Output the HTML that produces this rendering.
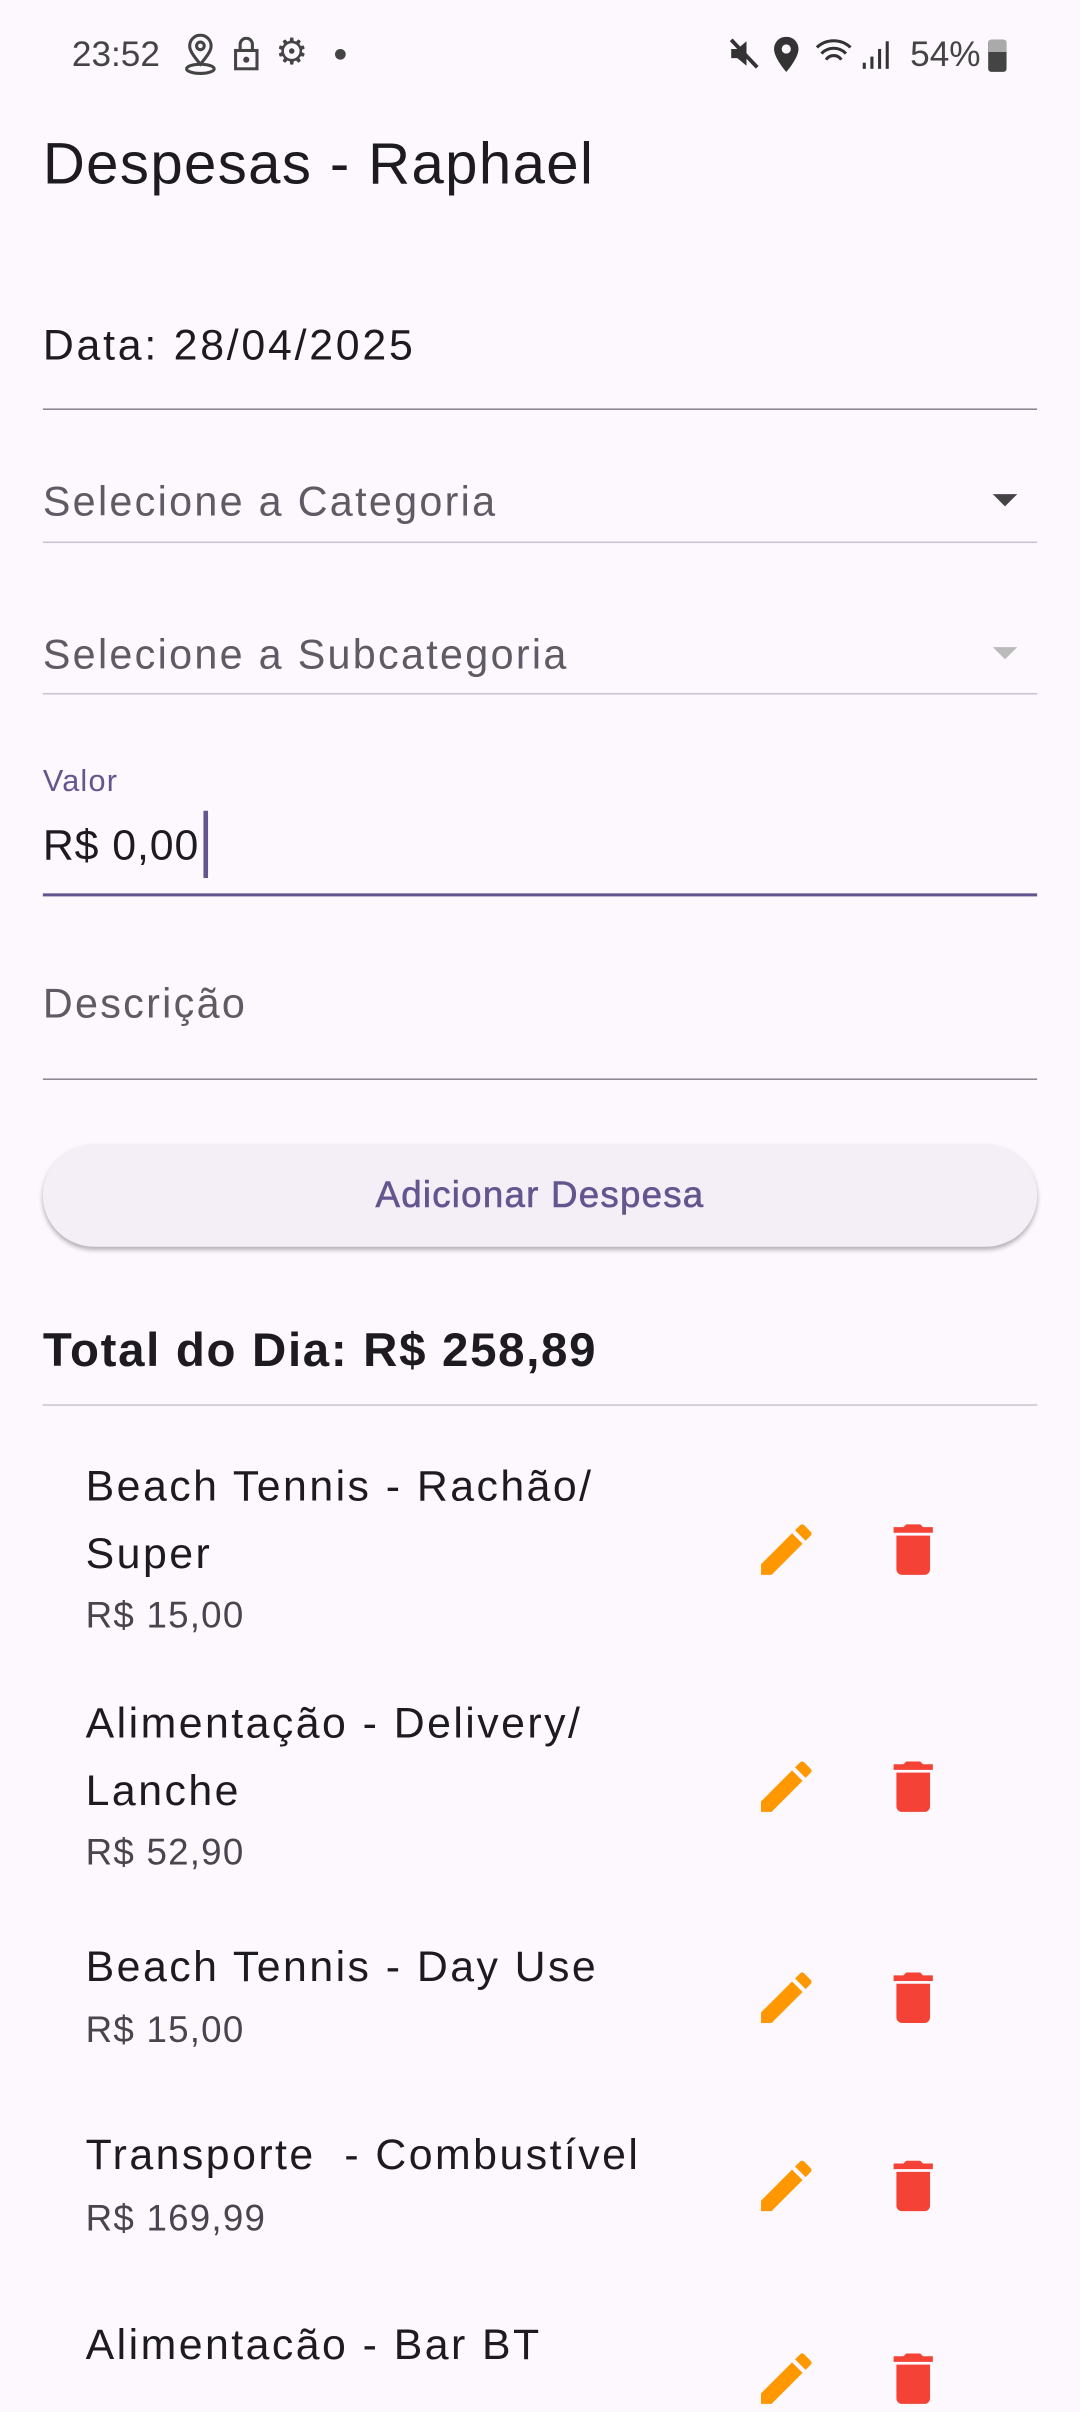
<!DOCTYPE html>
<html><head><meta charset="utf-8"><style>
html,body{margin:0;padding:0;background:#fdf7fe;}
body{width:1080px;height:2400px;overflow:hidden;position:relative;}
#w{position:absolute;left:0;top:0;width:706px;height:1569px;transform:scale(1.5297);transform-origin:0 0;font-family:"Liberation Sans",sans-serif;color:#1d1b20;}
.a{position:absolute;white-space:nowrap;}
.ln{position:absolute;left:28px;width:650px;height:1px;background:#8a8590;}
.lbl{font-size:27px;color:#5f5b64;letter-spacing:1.5px;}
.it{font-size:28px;color:#1d1b20;line-height:44px;letter-spacing:1.6px;}
.pr{font-size:24px;color:#49454f;letter-spacing:0.8px;}
svg.ic{position:absolute;width:44px;height:44px;}
</style></head><body><div id="w">
<div class="a" style="left:47px;top:22px;font-size:23px;color:#444">23:52</div>
<svg class="a" style="left:118px;top:22px" width="26" height="28" viewBox="0 0 26 28" fill="none" stroke="#444" stroke-width="2"><path d="M13 20C8 14 6 11 6 8a7 7 0 0 1 14 0c0 3-2 6-7 12z"/><circle cx="13" cy="8" r="2.5"/><ellipse cx="13" cy="23" rx="9" ry="3"/></svg>
<svg class="a" style="left:152px;top:24px" width="18" height="22" viewBox="0 0 18 22" fill="none" stroke="#444" stroke-width="2"><rect x="2" y="9" width="14" height="12"/><path d="M5 9V5a4 4 0 0 1 8 0v4"/><circle cx="9" cy="15" r="1" fill="#444"/></svg>
<div class="a" style="left:180px;top:20px;font-size:24px;color:#444">⚙</div>
<div class="a" style="left:219px;top:32px;width:7px;height:7px;border-radius:50%;background:#444"></div>
<svg class="a" style="left:475px;top:24px" width="22" height="22" viewBox="0 0 22 22"><path d="M3 8h4l6-5v16l-6-5H3z" fill="#333"/><path d="M3 2l17 18" stroke="#333" stroke-width="2.5"/></svg>
<svg class="a" style="left:505px;top:24px" width="18" height="24" viewBox="0 0 18 24"><path d="M9 0a8 8 0 0 0-8 8c0 6 8 15 8 15s8-9 8-15a8 8 0 0 0-8-8z" fill="#333"/><circle cx="9" cy="8" r="3" fill="#fdf7fe"/></svg>
<svg class="a" style="left:532px;top:24px" width="28" height="22" viewBox="0 0 28 22" fill="none" stroke="#333" stroke-width="2"><path d="M2 7a16 16 0 0 1 22 0M5 11a11 11 0 0 1 16 0M8 15a6 6 0 0 1 10 0"/></svg>
<svg class="a" style="left:563px;top:26px" width="22" height="20" viewBox="0 0 22 20" fill="#333"><rect x="1" y="15" width="2" height="4"/><rect x="6" y="11" width="2" height="8"/><rect x="11" y="6" width="2" height="13"/><rect x="16" y="1" width="2" height="18"/></svg>
<div class="a" style="left:595px;top:22px;font-size:23px;color:#444">54%</div>
<div class="a" style="left:646px;top:26px;width:12px;height:21px;background:#444;border-radius:2px"></div>
<div class="a" style="left:646px;top:26px;width:12px;height:8px;background:#aaa;border-radius:2px 2px 0 0"></div>

<div class="a" style="left:28px;top:87px;font-size:38px;letter-spacing:0.9px">Despesas - Raphael</div>
<div class="a" style="left:28px;top:210px;font-size:28px;letter-spacing:1.8px">Data: 28/04/2025</div>
<div class="ln" style="top:267px"></div>
<div class="a lbl" style="left:28px;top:313px">Selecione a Categoria</div>
<div class="a" style="left:649px;top:323px;width:0;height:0;border-left:8px solid transparent;border-right:8px solid transparent;border-top:8px solid #444"></div>
<div class="ln" style="top:354px;background:#cac4d0"></div>
<div class="a lbl" style="left:28px;top:413px">Selecione a Subcategoria</div>
<div class="a" style="left:649px;top:423px;width:0;height:0;border-left:8px solid transparent;border-right:8px solid transparent;border-top:8px solid #bbb"></div>
<div class="ln" style="top:453px;background:#cac4d0"></div>
<div class="a" style="left:28px;top:500px;font-size:20px;color:#65558f;letter-spacing:0.8px">Valor</div>
<div class="a" style="left:28px;top:537px;font-size:28px;letter-spacing:0.6px">R$ 0,00</div>
<div class="a" style="left:133px;top:530px;width:3px;height:44px;background:#65558f"></div>
<div class="ln" style="top:584px;height:2px;background:#65558f"></div>
<div class="a lbl" style="left:28px;top:641px">Descrição</div>
<div class="ln" style="top:705px"></div>
<div class="a" style="left:28px;top:748px;width:650px;height:67px;border-radius:34px;background:#f4eff6;box-shadow:0 2px 3px rgba(0,0,0,.3);text-align:center;line-height:67px;font-size:24px;color:#65558f;letter-spacing:0.8px;font-weight:bold;"><span style="font-weight:normal;-webkit-text-stroke:0.4px #65558f">Adicionar Despesa</span></div>
<div class="a" style="left:28px;top:865px;font-size:31px;font-weight:bold;letter-spacing:1.1px">Total do Dia: R$ 258,89</div>
<div class="ln" style="top:918px;background:#cac4d0"></div>

<div class="a it" style="left:56px;top:950px">Beach Tennis - Rachão/<br>Super</div>
<div class="a pr" style="left:56px;top:1043px">R$ 15,00</div>
<div class="a it" style="left:56px;top:1105px">Alimentação - Delivery/<br>Lanche</div>
<div class="a pr" style="left:56px;top:1198px">R$ 52,90</div>
<div class="a it" style="left:56px;top:1264px">Beach Tennis - Day Use</div>
<div class="a pr" style="left:56px;top:1314px">R$ 15,00</div>
<div class="a it" style="left:56px;top:1387px">Transporte &nbsp;- Combustível</div>
<div class="a pr" style="left:56px;top:1437px">R$ 169,99</div>
<div class="a it" style="left:56px;top:1511px">Alimentacão - Bar BT</div>

<svg width="0" height="0" style="position:absolute"><defs>
<path id="ed" fill="#ff9800" d="M3 17.25V21h3.75L17.81 9.94l-3.75-3.75L3 17.25zM20.71 7.04c.39-.39.39-1.02 0-1.41l-2.34-2.34c-.39-.39-1.02-.39-1.41 0l-1.83 1.83 3.75 3.75 1.83-1.83z"/>
<path id="dl" fill="#f44336" d="M6 19c0 1.1.9 2 2 2h8c1.1 0 2-.9 2-2V7H6v12zM19 4h-3.5l-1-1h-5l-1 1H5v2h14V4z"/>
</defs></svg>
<svg class="ic" style="left:492px;top:991px" viewBox="0 0 24 24"><use href="#ed"/></svg>
<svg class="ic" style="left:575px;top:991px" viewBox="0 0 24 24"><use href="#dl"/></svg>
<svg class="ic" style="left:492px;top:1146px" viewBox="0 0 24 24"><use href="#ed"/></svg>
<svg class="ic" style="left:575px;top:1146px" viewBox="0 0 24 24"><use href="#dl"/></svg>
<svg class="ic" style="left:492px;top:1284px" viewBox="0 0 24 24"><use href="#ed"/></svg>
<svg class="ic" style="left:575px;top:1284px" viewBox="0 0 24 24"><use href="#dl"/></svg>
<svg class="ic" style="left:492px;top:1407px" viewBox="0 0 24 24"><use href="#ed"/></svg>
<svg class="ic" style="left:575px;top:1407px" viewBox="0 0 24 24"><use href="#dl"/></svg>
<svg class="ic" style="left:492px;top:1533px" viewBox="0 0 24 24"><use href="#ed"/></svg>
<svg class="ic" style="left:575px;top:1533px" viewBox="0 0 24 24"><use href="#dl"/></svg>
</div></body></html>
